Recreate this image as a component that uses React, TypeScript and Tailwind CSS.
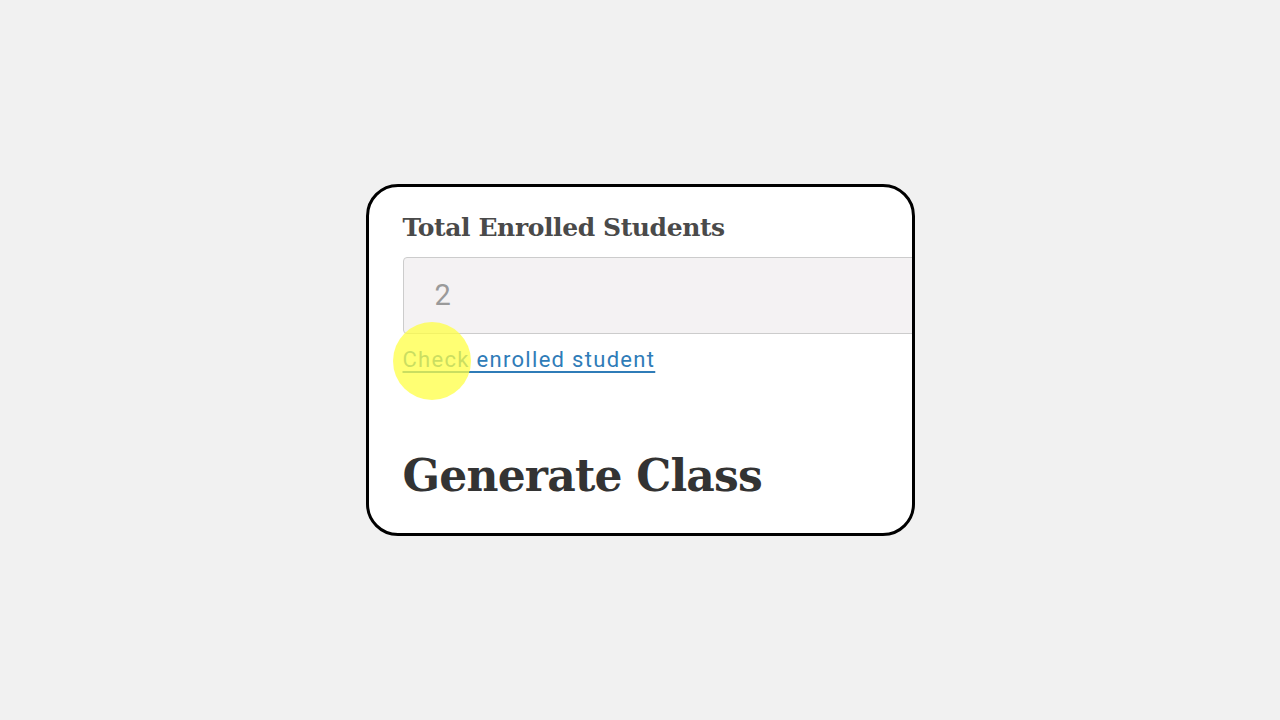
const App = () => {
  return (
    <div className="w-[1280px] h-[720px] bg-[#f1f1f1] flex items-center justify-center">
      <div className="relative w-[549px] h-[352px] bg-white border-[3px] border-black rounded-[32px] overflow-hidden">
        <div className="pl-[34px] pt-[24px] flex flex-col">
          <label className="text-[25px] leading-[34px] font-bold text-[#4a4a4a] font-['DejaVu_Serif',serif] tracking-[-0.4px]">
            Total Enrolled Students
          </label>
          <div className="mt-[12px] w-[560px] h-[77px] bg-[#f4f2f3] border border-[#cccccc] rounded-[4px] flex items-center pl-[31px]">
            <span className="text-[29px] text-[#9a9a9a] font-['Roboto',sans-serif]">2</span>
          </div>
          <a
            href="#"
            className="mt-[12px] w-fit text-[22px] leading-[28px] text-[#2f7cb8] underline underline-offset-[4px] tracking-[1.3px] font-['Roboto',sans-serif]"
          >
            Check enrolled student
          </a>
          <h2 className="mt-[76px] text-[44px] leading-[52px] font-bold text-[#333333] font-['DejaVu_Serif',serif] tracking-[-0.8px]">
            Generate Class
          </h2>
        </div>
        <div className="absolute left-[24px] top-[135px] w-[78px] h-[78px] rounded-full bg-[#ffff44]/75" />
      </div>
    </div>
  );
};

export default App;
